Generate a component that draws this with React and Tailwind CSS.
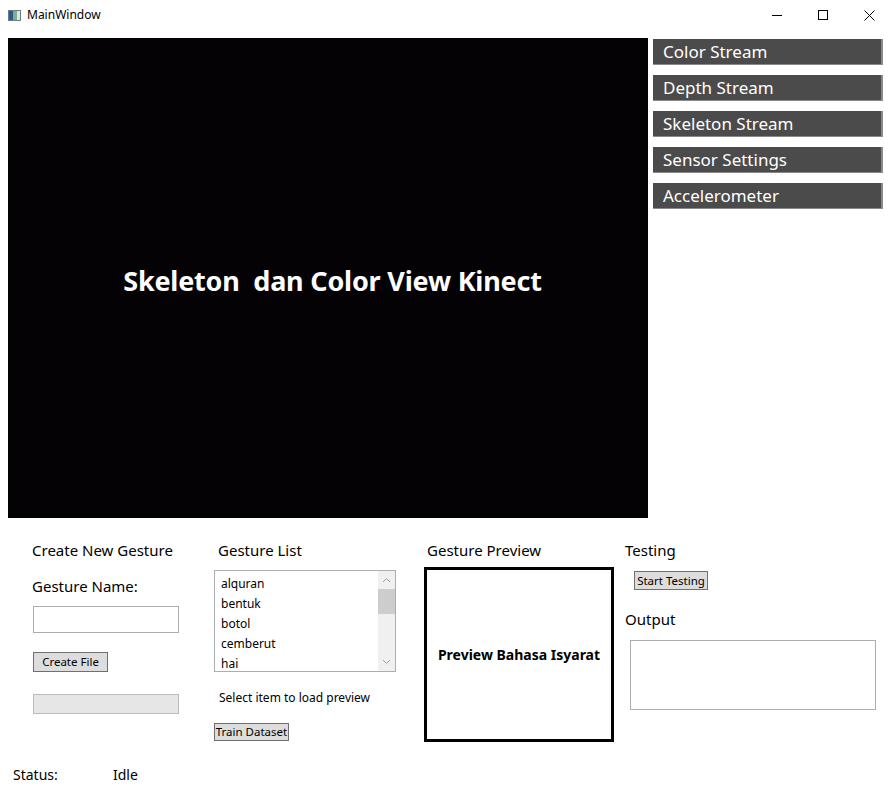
import React from "react";

const font = { fontFamily: '"Noto Sans", "Open Sans", sans-serif' };

function SideButton({ label }) {
  return (
    <div className="h-[26px] w-[230px] bg-[#4b4b4b] border-r-2 border-b border-[#8a8a8a] text-white text-[17px] leading-[25px] pl-[10px]">
      {label}
    </div>
  );
}

function WinButton({ label, w, h }) {
  return (
    <button
      className={`block border border-[#707070] bg-[#dddddd] text-[11.5px] leading-[16px] text-black text-center ${w} ${h}`}
    >
      {label}
    </button>
  );
}

export default function App() {
  const gestures = ["alquran", "bentuk", "botol", "cemberut", "hai"];

  return (
    <div className="w-[892px] h-[790px] bg-white text-black overflow-hidden" style={font}>
      {/* title bar */}
      <div className="h-[30px] flex items-center justify-between">
        <div className="flex items-center pl-[8px] gap-[6px]">
          <div className="w-[13px] h-[11px] border border-[#6b7b8c] flex">
            <div className="w-[4px] bg-[#2b5a8a]" />
            <div className="w-[4px] bg-[#7fb07f]" />
            <div className="flex-1 bg-[#d8e4ee]" />
          </div>
          <span className="text-[12px]">MainWindow</span>
        </div>
        <div className="flex items-center h-full">
          <div className="w-[46px] flex justify-center">
            <div className="w-[10px] h-px bg-black" />
          </div>
          <div className="w-[46px] flex justify-center">
            <div className="w-[10px] h-[10px] border border-black" />
          </div>
          <div className="w-[46px] flex justify-center">
            <svg width="11" height="11" viewBox="0 0 11 11">
              <path d="M0.5 0.5 L10.5 10.5 M10.5 0.5 L0.5 10.5" stroke="black" strokeWidth="1" />
            </svg>
          </div>
        </div>
      </div>

      {/* top area */}
      <div className="flex pt-[8px] pl-[8px] gap-[5px]">
        <div className="w-[640px] h-[480px] bg-[#040204] flex items-center justify-center">
          <span className="text-white font-bold text-[27px] tracking-[-0.2px] whitespace-pre pt-[6px] pl-[9px]">
            Skeleton  dan Color View Kinect
          </span>
        </div>
        <div className="flex flex-col gap-[10px] pt-[1px]">
          <SideButton label="Color Stream" />
          <SideButton label="Depth Stream" />
          <SideButton label="Skeleton Stream" />
          <SideButton label="Sensor Settings" />
          <SideButton label="Accelerometer" />
        </div>
      </div>

      {/* bottom area */}
      <div className="flex pt-[22px]">
        {/* create new gesture */}
        <div className="w-[214px] pl-[32px] flex flex-col">
          <div className="text-[15px] leading-[20px]">Create New Gesture</div>
          <div className="text-[15px] leading-[20px] mt-[16px]">Gesture Name:</div>
          <div className="ml-[1px] mt-[10px] w-[146px] h-[27px] border border-[#abadb3]" />
          <div className="ml-[1px] mt-[19px]">
            <WinButton label="Create File" w="w-[75px]" h="h-[20px]" />
          </div>
          <div className="ml-[1px] mt-[22px] w-[146px] h-[20px] border border-[#bcbcbc] bg-[#e6e6e6]" />
        </div>

        {/* gesture list */}
        <div className="w-[210px] flex flex-col">
          <div className="text-[15px] leading-[20px] pl-[4px]">Gesture List</div>
          <div className="mt-[10px] w-[182px] h-[102px] border border-[#abadb3] flex">
            <div className="flex-1 pl-[6px] pt-[3px]">
              {gestures.map((g) => (
                <div key={g} className="text-[12px] leading-[20px]">
                  {g}
                </div>
              ))}
            </div>
            <div className="w-[17px] bg-[#f0f0f0] flex flex-col items-center">
              <svg width="9" height="18" viewBox="0 0 9 18">
                <path d="M1 11 L4.5 7.5 L8 11" fill="none" stroke="#a0a0a0" strokeWidth="1" />
              </svg>
              <div className="w-[17px] h-[25px] bg-[#cdcdcd]" />
              <div className="flex-1" />
              <svg width="9" height="18" viewBox="0 0 9 18">
                <path d="M1 7 L4.5 10.5 L8 7" fill="none" stroke="#a0a0a0" strokeWidth="1" />
              </svg>
            </div>
          </div>
          <div className="text-[12px] leading-[16px] mt-[18px] pl-[5px]">Select item to load preview</div>
          <div className="mt-[17px]">
            <WinButton label="Train Dataset" w="w-[75px]" h="h-[18px]" />
          </div>
        </div>

        {/* preview */}
        <div className="w-[201px] flex flex-col">
          <div className="text-[15px] leading-[20px] pl-[3px]">Gesture Preview</div>
          <div className="mt-[7px] w-[190px] h-[175px] border-[3px] border-black flex items-center justify-center">
            <span className="font-bold text-[14px]">Preview Bahasa Isyarat</span>
          </div>
        </div>

        {/* testing */}
        <div className="flex-1 flex flex-col">
          <div className="text-[15px] leading-[20px]">Testing</div>
          <div className="mt-[11px] pl-[9px]">
            <WinButton label="Start Testing" w="w-[74px]" h="h-[19px]" />
          </div>
          <div className="text-[15px] leading-[20px] mt-[19px]">Output</div>
          <div className="ml-[5px] mt-[11px] w-[246px] h-[70px] border border-[#abadb3]" />
        </div>
      </div>

      {/* status */}
      <div className="flex pl-[13px] mt-[23px] text-[14px] leading-[20px]">
        <span className="w-[100px]">Status:</span>
        <span>Idle</span>
      </div>
    </div>
  );
}
